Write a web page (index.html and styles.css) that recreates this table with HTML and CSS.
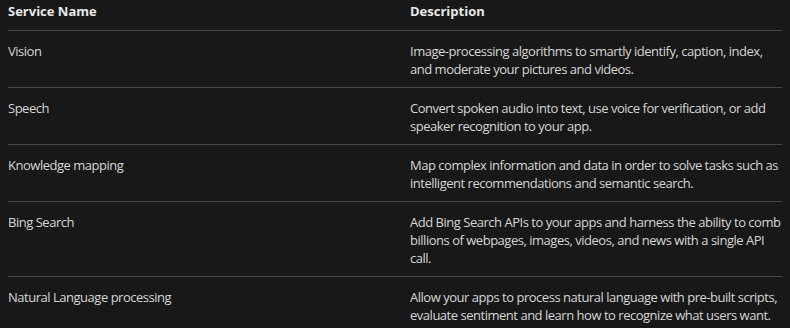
FILE: index.html
```html
<!DOCTYPE html>
<html lang="en">
<head>
  <meta charset="UTF-8" />
  <title>Cognitive Services</title>
  <link rel="stylesheet" href="styles.css">
</head>
<body>
  <table class="services">
    <thead>
      <tr>
        <th class="col-name">Service Name</th>
        <th class="col-desc">Description</th>
      </tr>
    </thead>
    <tbody>
      <tr>
        <td>Vision</td>
        <td>Image-processing algorithms to smartly identify, caption, index, and moderate your pictures and videos.</td>
      </tr>
      <tr>
        <td>Speech</td>
        <td>Convert spoken audio into text, use voice for verification, or add speaker recognition to your app.</td>
      </tr>
      <tr>
        <td>Knowledge mapping</td>
        <td>Map complex information and data in order to solve tasks such as intelligent recommendations and semantic search.</td>
      </tr>
      <tr>
        <td>Bing Search</td>
        <td>Add Bing Search APIs to your apps and harness the ability to comb billions of webpages, images, videos, and news with a single API call.</td>
      </tr>
      <tr>
        <td>Natural Language processing</td>
        <td>Allow your apps to process natural language with pre-built scripts, evaluate sentiment and learn how to recognize what users want.</td>
      </tr>
    </tbody>
  </table>
</body>
</html>
```

FILE: styles.css
```css
:root {
  --bg-color: #181818;
  --text-color: #d6d6d6;
  --head-color: #e8e8e8;
  --line-color: #474747;
}

body {
  margin: 0 8px;
  background-color: var(--bg-color);
  color: var(--text-color);
  font-family: "Open Sans", "Noto Sans", sans-serif;
  font-size: 13px;
  line-height: 18px;
  letter-spacing: -0.48px;
}

.services {
  width: 100%;
  border-collapse: collapse;
  table-layout: fixed;
}

.services th {
  text-align: left;
  font-weight: bold;
  color: var(--head-color);
  letter-spacing: 0;
  padding: 2px 0 10px;
  border-bottom: 1px solid var(--line-color);
}

.col-name {
  width: 402px;
}

.services td {
  vertical-align: top;
  padding: 11px 0 9px;
  border-bottom: 1px solid var(--line-color);
}

.services tr:last-child td {
  border-bottom: none;
}
```
